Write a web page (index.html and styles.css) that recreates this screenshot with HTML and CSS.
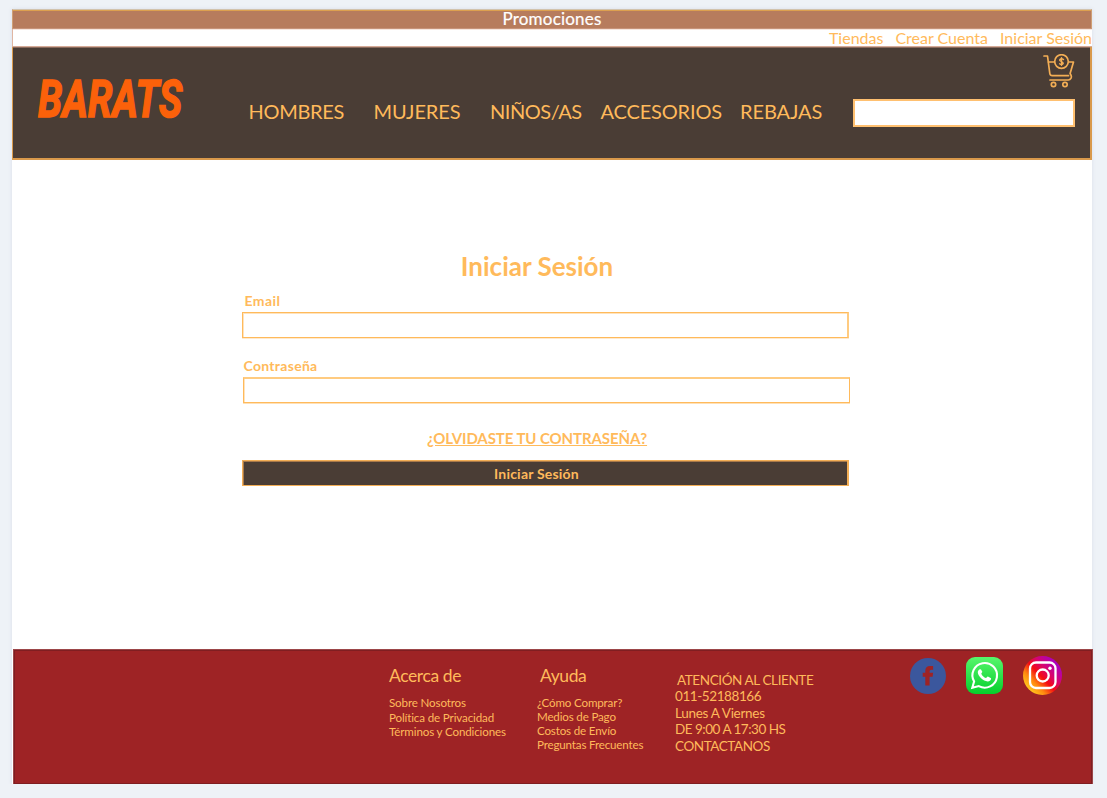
FILE: index.html
```html
<!DOCTYPE html>
<html lang="es">
<head>
<meta charset="utf-8">
<title>Barats - Iniciar Sesión</title>
<link rel="stylesheet" href="styles.css">
</head>
<body>
<div class="page">
  <header class="header">
    <div class="promo">Promociones</div>
    <nav class="account">
      <a>Tiendas</a><a>Crear Cuenta</a><a>Iniciar Sesión</a>
    </nav>
    <div class="main-bar">
      <div class="logo"><span class="logo-text">BARATS</span></div>
      <nav class="menu">
        <a class="hombres">HOMBRES</a><a class="mujeres">MUJERES</a><a class="ninos">NIÑOS/AS</a><a class="accesorios">ACCESORIOS</a><a class="rebajas">REBAJAS</a>
      </nav>
      <div class="tools">
        <svg class="cart" viewBox="0 0 32 34" fill="none" stroke="#f3ae55" stroke-width="1.700" stroke-linecap="round" stroke-linejoin="round">
          <path d="M1 2h3.500l2.300 17.500q.3 2.200 2.500 2.200h16.200"/><path d="M5.500 8H11M26 8h4.500l-3.400 11.500 1 1.800a3.300 3.300 0 0 1-2.800 4.700H7"/>
          <circle cx="18.500" cy="7.500" r="6.800"/><path d="M20.500 5.500q-2-1.700-3.700 0c-1 1.800 3.500 2 3.400 4q-1.500 1.800-3.600.3M18.500 3.800v7.600" stroke-width="1.400"/>
          <circle cx="10.500" cy="30.500" r="2.200"/><circle cx="22" cy="30.500" r="2.200"/>
        </svg>
        <input class="search" type="text" aria-label="Buscar">
      </div>
    </div>
  </header>
  <main class="content">
    <form class="login">
      <h1 class="title">Iniciar Sesión</h1>
      <label class="label label-email" for="email">Email</label>
      <input class="field field-email" id="email" type="email">
      <label class="label label-pass" for="pass">Contraseña</label>
      <input class="field field-pass" id="pass" type="password">
      <a class="forgot">¿OLVIDASTE TU CONTRASEÑA?</a>
      <button class="submit" type="button">Iniciar Sesión</button>
    </form>
  </main>
  <footer class="footer">
    <section class="about">
      <h2 class="foot-title">Acerca de</h2>
      <ul class="links"><li>Sobre Nosotros</li><li>Política de Privacidad</li><li>Términos y Condiciones</li></ul>
    </section>
    <section class="help">
      <h2 class="foot-title">Ayuda</h2>
      <ul class="links"><li>¿Cómo Comprar?</li><li>Medios de Pago</li><li>Costos de Envío</li><li>Preguntas Frecuentes</li></ul>
    </section>
    <section class="contact">
      <p class="lead">ATENCIÓN AL CLIENTE</p><p>011-52188166</p><p class="days">Lunes A Viernes</p><p class="hours">DE 9:00 A 17:30 HS</p><p>CONTACTANOS</p>
    </section>
    <div class="social">
      <svg class="facebook" viewBox="0 0 36 36"><circle cx="18" cy="18" r="18" fill="#3b579d"/><path d="M15.300 27.500V18.800H12.700V14.800h2.600v-2q0-4.800 4.800-4.800h3v3.800h-2q-1.500 0-1.500 1.500v1.500h3.500l-.5 4h-3v8.700z" fill="#9e2325"/></svg>
      <svg class="whatsapp" viewBox="0 0 37 37"><defs><linearGradient id="wa" x1="0" y1="0" x2="0" y2="1"><stop offset="0" stop-color="#57f66c"/><stop offset="1" stop-color="#05cf2c"/></linearGradient></defs><rect width="37" height="37" rx="9" fill="url(#wa)"/><path d="M6.300 30.800l1.800-6.300a12.300 12.300 0 1 1 4.700 4.600z" fill="none" stroke="#fff" stroke-width="2.100"/><path d="M14.200 12.200c-1.100-.1-2.400 1.300-2.400 3.100 0 3.800 5.600 9.100 9.800 9.100 2 0 3.700-1.400 3.500-3.200l-3.200-1.700c-.8-.1-1.300 1.500-2 1.500-1.500-.3-4.200-2.800-4.600-4.300 0-.6 1.100-1.200 1-1.900l-1.300-2.300z" fill="#fff"/></svg>
      <svg class="instagram" viewBox="0 0 39 39"><defs><linearGradient id="ig" x1=".1" y1=".85" x2=".85" y2=".15"><stop offset="0" stop-color="#ffd01f"/><stop offset=".25" stop-color="#ff8a10"/><stop offset=".48" stop-color="#f40b12"/><stop offset=".68" stop-color="#d9046b"/><stop offset="1" stop-color="#a800c4"/></linearGradient></defs><circle cx="19.500" cy="19.500" r="19.500" fill="url(#ig)"/><g fill="none" stroke="#fff" stroke-width="2.300"><rect x="7" y="6.500" width="25.500" height="25.500" rx="6"/><circle cx="19.700" cy="19.500" r="6"/></g><circle cx="27" cy="12.200" r="1.700" fill="#fff"/></svg>
    </div>
  </footer>
</div>
</body>
</html>
```

FILE: styles.css
```css
* { box-sizing: border-box; }
body { margin: 0; background: #eef2f7; font-family: Lato, "Liberation Sans", sans-serif; color: #ffba5b; white-space: nowrap; font-variant-ligatures: none; }
h1, h2, p, ul { margin: 0; padding: 0; font-weight: 400; list-style: none; }

.page { width: 1080px; height: 775px; margin: 9px 0 0 12px; background: #fff; box-shadow: 0 0 4px #d9dee9; display: flex; flex-direction: column; }
.header, .content, .footer { flex: none; }

.promo { height: 20px; background: #b77c5d; border: 1px solid #cf9f75; border-top-color: #d2c3ae; border-bottom-color: #c79379; box-shadow: inset 0 1px 0 #dda04f, 0 1px 0 #f6e6de; color: #fff; text-align: center; font-size: 17px; line-height: 18px; letter-spacing: .2px; -webkit-text-stroke: .2px #fff; }
.account { height: 18px; display: flex; justify-content: flex-end; gap: 12px; font-size: 16px; line-height: 18px; border: 1px solid #e0b6a2; border-top: 0; border-right: 0; border-bottom-color: #d5ab98; }
.main-bar { height: 113px; background: #4a3d35; border: solid #d9994b; border-width: 0 2px 2px 1px; box-shadow: inset 0 1px 0 #8a6a5c; display: flex; }
.logo { width: 193px; padding: 23px 0 0 25px; flex: none; }
.logo-text { display: inline-block; font: italic 700 51px/60px Roboto, sans-serif; color: #fb610a; -webkit-text-stroke: 1.5px #fb610a; transform: scaleX(.77); transform-origin: 0 0; }
.menu { display: flex; flex: none; width: 590px; padding: 52px 0 0 42.500px; font-size: 20px; line-height: 24px; }
.menu a { flex: none; }
.hombres { width: 125px; letter-spacing: -.3px; }
.mujeres { width: 116.500px; letter-spacing: -.1px; }
.ninos { width: 110.500px; letter-spacing: -.45px; }
.accesorios { width: 139.500px; letter-spacing: -.15px; }
.rebajas { letter-spacing: -.1px; }
.tools { margin-left: auto; width: 223px; margin-right: 15px; display: flex; flex-direction: column; align-items: flex-end; }
.cart { width: 32px; height: 34px; margin-top: 7px; }
.search { width: 222px; height: 28px; margin-top: 11px; border: 2px solid #ffc070; background: #fff; padding: 0; }

.content { height: 489px; padding: 90px 0 0 230px; }
.login { width: 607px; display: flex; flex-direction: column; }
.title { width: 590px; font-size: 26px; line-height: 32px; font-weight: 700; text-align: center; }
.label { font-size: 14px; line-height: 18px; font-weight: 700; }
.label-email { margin-top: 10px; padding-left: 2.500px; letter-spacing: .4px; }
.label-pass { margin-top: 19px; padding-left: 1.500px; letter-spacing: .3px; }
.field { width: 607px; height: 26px; margin-top: 2px; border: 1px solid #ffba5b; padding: 0; background: #fff; }
.field-email { border-right: 2px solid #ffcb80; box-shadow: inset 1px 1px 0 #ffe3bd, 0 1px 0 #ffe9cd; }
.field-pass { margin-left: 1px; border-top: 2px solid #ffcb80; box-shadow: inset 1px 0 0 #ffe3bd, 0 1px 0 #ffe0b6; }
.forgot { width: 590px; font-size: 15px; line-height: 20px; font-weight: 700; text-align: center; text-decoration: underline; margin-top: 25px; letter-spacing: -.09px; }
.submit { height: 26px; margin-top: 12px; background: #4a3d35; border: 1px solid #f3ae55; border-right-width: 2px; box-shadow: inset 0 1px 0 #a8794a, inset 1px 0 0 #a8794a; color: #ffba5b; font: 700 14px/18px Lato, sans-serif; letter-spacing: .2px; padding: 2px 17px 0 0; }

.footer { width: 1080px; height: 136px; margin-left: 1px; background: #9e2325; border: 1px solid #9c4649; box-shadow: inset 0 0 0 1px #7f1e21; display: flex; }
.about { width: 148px; margin-left: 375px; padding-top: 15px; letter-spacing: -.14px; }
.help { width: 138px; padding-top: 15px; letter-spacing: -.17px; }
.foot-title { font-size: 17.500px; line-height: 22px; letter-spacing: -.4px; }
.help .foot-title { padding-left: 3px; }
.links { font-size: 11.600px; line-height: 14px; margin-top: 9px; }
.about .links li:first-child { margin-bottom: 1px; }
.contact { font-size: 13.500px; line-height: 16.500px; padding-top: 21.500px; letter-spacing: -.42px; }
.lead { padding-left: 2px; letter-spacing: -.4px; }
.days { letter-spacing: -.3px; }
.hours { letter-spacing: -.5px; }
.social { margin-left: auto; display: flex; gap: 20px; padding-top: 6px; margin-right: 30.500px; }
.facebook { width: 36px; height: 36px; margin-top: 2px; }
.whatsapp { width: 37px; height: 37px; margin-top: 1px; }
.instagram { width: 39px; height: 39px; }
```
